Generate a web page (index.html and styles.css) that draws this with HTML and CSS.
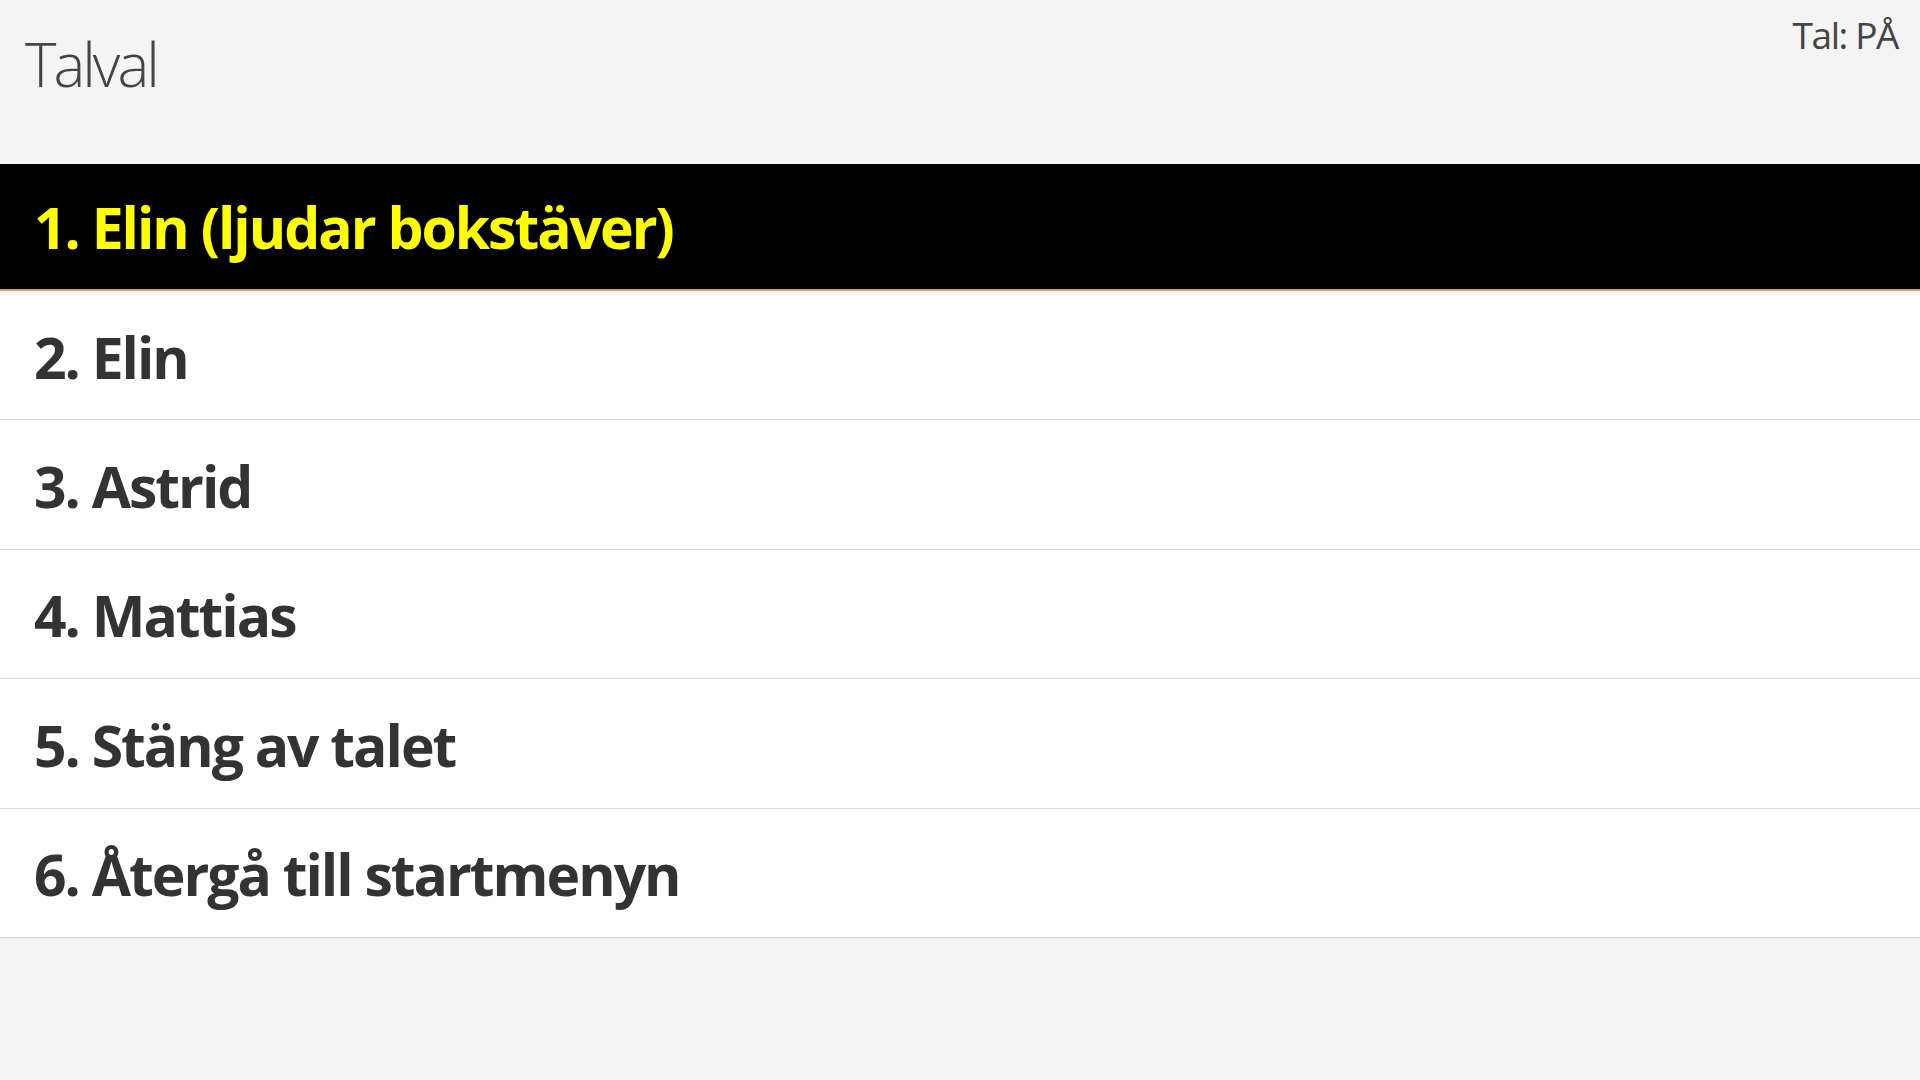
FILE: index.html
```html
<!DOCTYPE html>
<html lang="sv">
<head>
<meta charset="utf-8">
<title>Talval</title>
<link rel="stylesheet" href="styles.css">
</head>
<body>
<header class="top">
  <h1 class="title">Talval</h1>
  <div class="status">Tal: PÅ</div>
</header>
<ul class="menu">
  <li class="item selected">1. Elin (ljudar bokstäver)</li>
  <li class="item">2. Elin</li>
  <li class="item">3. Astrid</li>
  <li class="item">4. Mattias</li>
  <li class="item">5. Stäng av talet</li>
  <li class="item">6. Återgå till startmenyn</li>
</ul>
</body>
</html>
```
FILE: styles.css
```css
html, body {
  margin: 0;
  padding: 0;
}
body {
  background: #f4f4f4;
  font-family: "Open Sans", "Noto Sans", "DejaVu Sans", sans-serif;
  color: #333333;
  width: 1920px;
  height: 1080px;
  overflow: hidden;
}
.top {
  height: 164px;
  display: flex;
  justify-content: space-between;
  align-items: flex-start;
}
.title {
  margin: 0;
  padding: 24px 0 0 25px;
  font-size: 60px;
  font-weight: 300;
  line-height: 80px;
  letter-spacing: -3px;
  color: #444444;
}
.status {
  padding: 10px 22px 0 0;
  font-size: 37px;
  font-weight: 400;
  line-height: 50px;
  letter-spacing: -1.4px;
  color: #444444;
}
.menu {
  list-style: none;
  margin: 0;
  padding: 0;
}
.item {
  background: #ffffff;
  border-bottom: 1px solid #d9d9d9;
  display: flex;
  align-items: center;
  padding: 4px 0 0 34px;
  box-sizing: border-box;
  height: 129.4px;
  font-size: 57px;
  font-weight: 700;
  line-height: 1;
  letter-spacing: -2px;
  color: #333333;
}
.item.selected {
  background: #000000;
  color: #ffff00;
  height: 127px;
  border-bottom: 2px solid #d4a54a;
  padding-top: 2px;
}
```
